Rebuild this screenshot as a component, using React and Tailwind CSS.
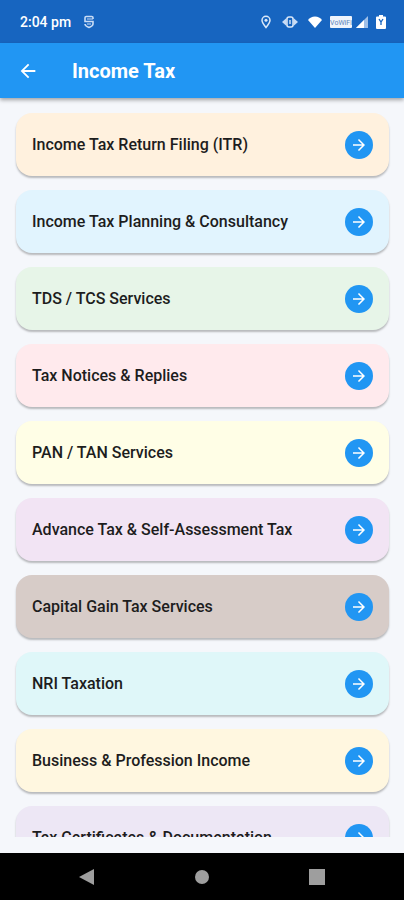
import React from 'react';
import { MdArrowBack, MdArrowForward } from 'react-icons/md';

const services = [
  { title: 'Income Tax Return Filing (ITR)', color: 'bg-[#fff1de]' },
  { title: 'Income Tax Planning & Consultancy', color: 'bg-[#e1f4fe]' },
  { title: 'TDS / TCS Services', color: 'bg-[#e7f5e8]' },
  { title: 'Tax Notices & Replies', color: 'bg-[#ffeaed]' },
  { title: 'PAN / TAN Services', color: 'bg-[#fffee6]' },
  { title: 'Advance Tax & Self-Assessment Tax', color: 'bg-[#f2e4f4]' },
  { title: 'Capital Gain Tax Services', color: 'bg-[#d7ccc8]' },
  { title: 'NRI Taxation', color: 'bg-[#dff7f9]' },
  { title: 'Business & Profession Income', color: 'bg-[#fff7e0]' },
  { title: 'Tax Certificates & Documentation', color: 'bg-[#ede7f5]' },
];

const StatusBar = () => (
  <div className="flex h-[43px] shrink-0 items-center justify-between bg-[#1765c0] pl-5 pr-[18px] text-white">
    <div className="flex items-center gap-3">
      <span className="text-sm font-medium">2:04 pm</span>
      {/* app notification */}
      <svg className="h-3.5 w-3" viewBox="0 0 12 14" fill="none" stroke="#c9dcf5">
        <path d="M10 4V2.8Q10 1.5 8.7 1.5H3.3Q2 1.5 2 2.8V6.5H10V9Q10 11 6 12.5Q2 11 2 9" strokeWidth="1.6" />
        <path d="M4 4H10M4 9H8" strokeWidth="1.2" />
      </svg>
    </div>

    <div className="flex items-center gap-2">
      {/* location */}
      <svg className="mr-0.5 h-3.5 w-3" viewBox="0 0 12 14" fill="none" stroke="#dbe8f8">
        <path d="M6 12.5C3.5 9.5 2 7.5 2 5.3A4 4 0 0 1 10 5.3C10 7.5 8.5 9.5 6 12.5Z" strokeWidth="1.5" />
        <circle cx="6" cy="5.3" r="1.5" fill="#dbe8f8" stroke="none" />
      </svg>
      {/* vibrate */}
      <svg className="mr-0.5 h-3 w-4" viewBox="0 0 16 12">
        <path d="M0 6L4.5 2V10ZM16 6L11.5 2V10Z" fill="#c9dcf5" />
        <rect x="5" y="1" width="6" height="10" rx="2" fill="#1765c0" stroke="#dbe8f8" strokeWidth="1.5" />
        <path d="M8 4V8" stroke="#dbe8f8" strokeWidth="1.4" />
      </svg>
      {/* wifi */}
      <svg className="h-3 w-3.5" viewBox="0 0 14 12" fill="white">
        <path d="M7 12L0 4Q2.5 0.5 7 0.5T14 4Z" />
      </svg>
      {/* vowifi */}
      <svg className="h-3 w-[22px]" viewBox="0 0 22 12">
        <rect width="22" height="12" rx="1" fill="#eef4fc" />
        <text x="11" y="9" textAnchor="middle" fontSize="7" fontFamily="Roboto, sans-serif" fill="#5d84b8">VoWiFi</text>
      </svg>
      {/* signal */}
      <svg className="-ml-1 h-3 w-3" viewBox="0 0 12 12">
        <path d="M12 0V12H0Z" fill="#9fc0e8" />
        <path d="M8 4V12H0Z" fill="white" />
      </svg>
      {/* battery */}
      <svg className="h-3.5 w-2.5" viewBox="0 0 10 14">
        <path d="M3 0H7V1.5H9Q10 1.5 10 2.5V13Q10 14 9 14H1Q0 14 0 13V2.5Q0 1.5 1 1.5H3Z" fill="white" />
        <path d="M3 4L5 7L7 4M5 7V10" fill="none" stroke="#1765c0" strokeWidth="1.3" />
      </svg>
    </div>
  </div>
);

const AppBar = () => (
  <header className="z-10 flex h-[55px] shrink-0 items-center gap-8 bg-[#2196f3] px-4 text-white shadow-[0_2px_4px_rgba(0,0,0,0.35)]">
    <button type="button" aria-label="Back" className="flex size-6 items-center justify-center">
      <MdArrowBack className="size-[22px]" />
    </button>
    <h1 className="text-xl font-bold">Income Tax</h1>
  </header>
);

const ServiceCard = ({ title, color }) => (
  <button
    type="button"
    className={`flex h-[63px] w-full shrink-0 items-center justify-between rounded-2xl px-4 text-left shadow-[0_2px_2px_rgba(0,0,0,0.25)] ${color}`}
  >
    <span className="text-base font-medium text-[#1d1d1d]">{title}</span>
    <span className="flex size-7 shrink-0 items-center justify-center rounded-full bg-[#2196f3] text-white">
      <MdArrowForward className="size-[18px]" />
    </span>
  </button>
);

const NavigationBar = () => (
  <nav className="flex h-[47px] shrink-0 items-center justify-between bg-black px-[79px]">
    <button type="button" aria-label="Back">
      <svg className="size-4" viewBox="0 0 16 16" fill="#9e9e9e">
        <path d="M15 0V16L0 8Z" />
      </svg>
    </button>
    <button type="button" aria-label="Home" className="size-3.5 rounded-full bg-[#9e9e9e]" />
    <button type="button" aria-label="Recent apps" className="size-4 bg-[#9e9e9e]" />
  </nav>
);

export default function App() {
  return (
    <div className="flex h-screen flex-col bg-[#f5f7fb] font-[Roboto,sans-serif]">
      <StatusBar />
      <AppBar />

      {/* services list */}
      <main className="mb-4 flex min-h-0 flex-1 flex-col gap-3.5 overflow-y-auto pl-4 pr-[15px] pt-[15px] [scrollbar-width:none]">
        {services.map((service) => (
          <ServiceCard key={service.title} {...service} />
        ))}
      </main>

      <NavigationBar />
    </div>
  );
}
